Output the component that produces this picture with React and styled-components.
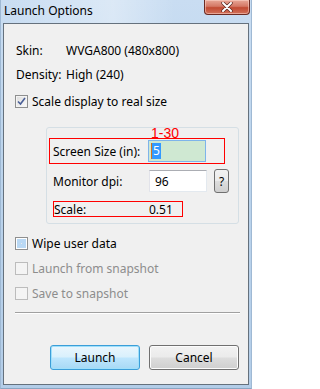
import React from "react";
import styled, { createGlobalStyle } from "styled-components";

const GlobalStyle = createGlobalStyle`
  html, body {
    margin: 0;
    padding: 0;
    background: #ffffff;
  }
  body {
    font-family: "Noto Sans", "Open Sans", sans-serif;
    font-size: 12px;
    color: #000000;
  }
`;

const Window = styled.div`
  width: 252px;
  height: 389px;
  box-sizing: border-box;
  padding: 0 2px 3px 2px;
  display: flex;
  flex-direction: column;
  background: linear-gradient(180deg, #c9ddf2 0%, #bcd4ec 40%, #b3cde8 100%);
  border-left: 1px solid #9fb9d4;
  border-right: 1px solid #9fb9d4;
  border-bottom: 1px solid #8aa6c2;
`;

const TitleBar = styled.div`
  height: 23px;
  display: flex;
  justify-content: space-between;
  align-items: flex-start;
  margin-left: -1px;
  background: linear-gradient(90deg, rgba(255,255,255,0) 0%, rgba(255,255,255,0.35) 45%, rgba(255,255,255,0) 70%);
`;

const Title = styled.span`
  padding: 3px 0 0 2px;
  line-height: 15px;
  font-size: 12px;
  color: #000;
`;

const CloseButton = styled.div`
  width: 46px;
  height: 15px;
  margin-right: -1px;
  box-sizing: border-box;
  border: 1px solid #6b2a22;
  border-top: none;
  border-radius: 0 0 4px 4px;
  background: linear-gradient(180deg, #e8a797 0%, #d47865 45%, #c14a32 55%, #d2725b 100%);
  display: flex;
  align-items: center;
  justify-content: center;
  box-shadow: inset 0 0 0 1px rgba(255, 220, 210, 0.5);
`;

const Client = styled.div`
  flex: 1;
  border: 1px solid #65717d;
  background: #f0f0f0;
  display: flex;
  flex-direction: column;
`;

const InfoRow = styled.div`
  height: 24px;
  display: flex;
  align-items: center;
  padding-left: 12px;
  margin-top: ${(p) => p.$top || 0}px;
`;

const InfoLabel = styled.span`
  width: 50px;
`;

const CheckRow = styled.div`
  height: ${(p) => p.$height || 25}px;
  display: flex;
  align-items: center;
  padding-left: 11px;
  margin-top: ${(p) => p.$top || 0}px;
  color: ${(p) => (p.$disabled ? "#8d8d8d" : "#000")};
`;

const Box = styled.span`
  width: 13px;
  height: 13px;
  box-sizing: border-box;
  margin-right: 4px;
  border: 1px solid ${(p) => (p.$disabled ? "#bcbcbc" : "#8e8f8f")};
  background: ${(p) =>
    p.$disabled ? "#f4f4f4" : "linear-gradient(135deg, #dcdcdc 0%, #fbfbfb 100%)"};
  display: flex;
  align-items: center;
  justify-content: center;
  box-shadow: ${(p) =>
    p.$hover ? "inset 0 0 0 1px #ffffff, inset 0 0 0 5px #b9d8f4" : "inset 0 0 0 1px #f4f4f4"};
`;

const Group = styled.div`
  position: relative;
  width: 193px;
  height: 97px;
  box-sizing: border-box;
  margin: 14px 0 0 42px;
  padding: 10px 0 0 2px;
  border: 1px solid #d5dfe5;
  border-radius: 3px;
`;

const RangeNote = styled.span`
  position: absolute;
  left: 104px;
  top: -3px;
  font-family: "Liberation Sans", Arial, sans-serif;
  font-size: 14px;
  line-height: 16px;
  color: #ff0000;
`;

const FieldRow = styled.div`
  display: flex;
  align-items: center;
  box-sizing: border-box;
  height: ${(p) => p.$height}px;
  width: ${(p) => (p.$width ? `${p.$width}px` : "auto")};
  margin: ${(p) => p.$margin || "0"};
  padding-left: ${(p) => p.$pad || 0}px;
  border: ${(p) => (p.$marked ? "1px solid #ff0000" : "none")};
`;

const FieldLabel = styled.span`
  width: ${(p) => p.$width}px;
  flex-shrink: 0;
`;

const Input = styled.div`
  width: 58px;
  height: ${(p) => p.$height || 22}px;
  box-sizing: border-box;
  border: 1px solid ${(p) => (p.$focus ? "#7eb4ea" : "#abadb3")};
  border-color: ${(p) => (p.$focus ? "#7eb4ea" : "#abadb3 #e3e9ef #e3e9ef #e2e3ea")};
  background: ${(p) => p.$bg || "#ffffff"};
  display: flex;
  align-items: center;
  padding-left: 2px;
`;

const Caret = styled.span`
  width: 1px;
  height: 16px;
  background: #d4751c;
`;

const Selected = styled.span`
  background: #3399ff;
  color: #ffffff;
  line-height: 16px;
  padding: 0 1px;
`;

const Value = styled.span`
  padding-left: 3px;
`;

const HelpButton = styled.div`
  width: 15px;
  height: 24px;
  margin-left: 7px;
  box-sizing: border-box;
  border: 1px solid #707070;
  border-radius: 3px;
  background: linear-gradient(180deg, #f2f2f2 0%, #ebebeb 48%, #dddddd 52%, #cfcfcf 100%);
  display: flex;
  align-items: center;
  justify-content: center;
  font-size: 12px;
`;

const Separator = styled.div`
  width: 225px;
  height: 1px;
  margin: 6px 0 0 11px;
  background: #a0a0a0;
  border-bottom: 1px solid #ffffff;
`;

const ButtonRow = styled.div`
  display: flex;
  gap: 9px;
  margin-top: 31px;
  padding-left: 46px;
`;

const Button = styled.div`
  width: 90px;
  height: 25px;
  box-sizing: border-box;
  border: 1px solid ${(p) => (p.$primary ? "#3c9ed8" : "#707070")};
  border-radius: 3px;
  background: ${(p) =>
    p.$primary
      ? "linear-gradient(180deg, #eaf6fd 0%, #d9f0fc 48%, #bee6fd 52%, #a7d9f5 100%)"
      : "linear-gradient(180deg, #f2f2f2 0%, #ebebeb 48%, #dddddd 52%, #cfcfcf 100%)"};
  box-shadow: ${(p) => (p.$primary ? "inset 0 0 0 1px #9fe0fb" : "inset 0 0 0 1px #fcfcfc")};
  display: flex;
  align-items: center;
  justify-content: center;
`;

const Check = () => (
  <svg width="9" height="9" viewBox="0 0 9 9">
    <path d="M1 4.5 L3.5 7 L8 1" fill="none" stroke="#4a5f97" strokeWidth="1.6" />
  </svg>
);

const CloseX = () => (
  <svg width="12" height="10" viewBox="0 0 12 10">
    <path d="M2 1 L10 9 M10 1 L2 9" stroke="#5a2a22" strokeWidth="3.4" strokeLinecap="round" />
    <path d="M2 1 L10 9 M10 1 L2 9" stroke="#ffffff" strokeWidth="2" strokeLinecap="round" />
  </svg>
);

export default function App() {
  return (
    <>
      <GlobalStyle />
      <Window>
        <TitleBar>
          <Title>Launch Options</Title>
          <CloseButton>
            <CloseX />
          </CloseButton>
        </TitleBar>
        <Client>
          <InfoRow $top={14}>
            <InfoLabel>Skin:</InfoLabel>
            <span>WVGA800 (480x800)</span>
          </InfoRow>
          <InfoRow>
            <InfoLabel>Density:</InfoLabel>
            <span>High (240)</span>
          </InfoRow>
          <CheckRow $top={3} $height={24}>
            <Box>
              <Check />
            </Box>
            Scale display to real size
          </CheckRow>

          <Group>
            <RangeNote>1-30</RangeNote>
            <FieldRow $marked $height={26} $width={176} $pad={3}>
              <FieldLabel $width={95}>Screen Size (in):</FieldLabel>
              <Input $focus $bg="#cfe8d2">
                <Caret />
                <Selected>5</Selected>
              </Input>
            </FieldRow>
            <FieldRow $height={24} $margin="5px 0 0 0" $pad={4}>
              <FieldLabel $width={96}>Monitor dpi:</FieldLabel>
              <Input>
                <Value>96</Value>
              </Input>
              <HelpButton>?</HelpButton>
            </FieldRow>
            <FieldRow $marked $height={16} $width={130} $margin="8px 0 0 4px">
              <FieldLabel $width={95}>Scale:</FieldLabel>
              <span>0.51</span>
            </FieldRow>
          </Group>

          <CheckRow $top={7}>
            <Box $hover />
            Wipe user data
          </CheckRow>
          <CheckRow $disabled>
            <Box $disabled />
            Launch from snapshot
          </CheckRow>
          <CheckRow $disabled>
            <Box $disabled />
            Save to snapshot
          </CheckRow>
          <Separator />
          <ButtonRow>
            <Button $primary>Launch</Button>
            <Button>Cancel</Button>
          </ButtonRow>
        </Client>
      </Window>
    </>
  );
}
